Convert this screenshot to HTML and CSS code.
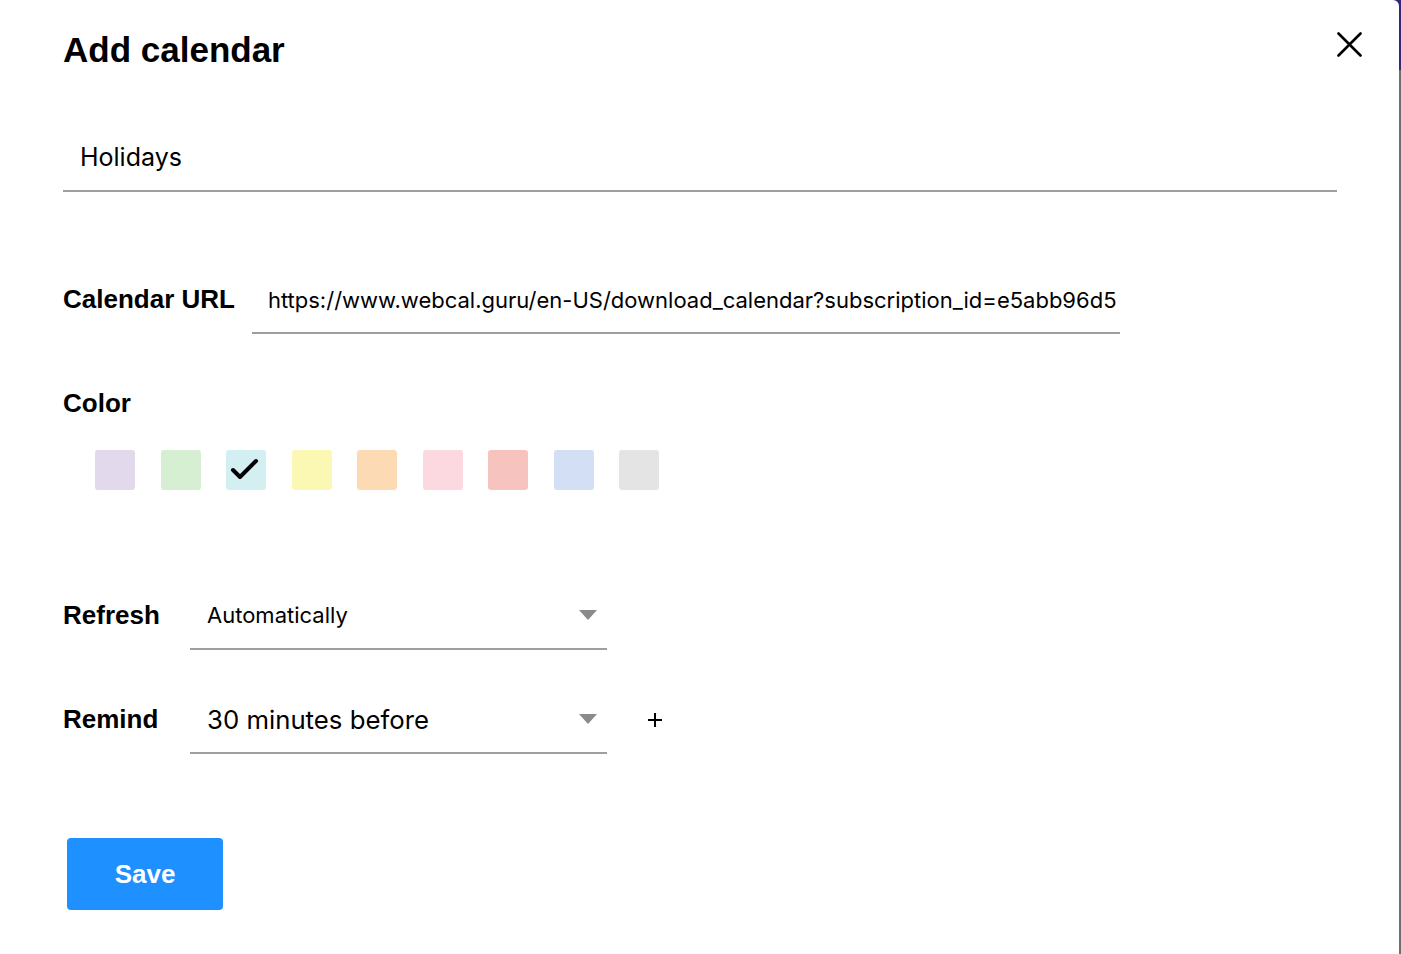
FILE: index.html
```html
<!DOCTYPE html>
<html lang="en">
<head>
    <meta charset="UTF-8">
    <meta name="viewport" content="width=device-width, initial-scale=1.0">
    <title>Add calendar</title>
    <link rel="stylesheet" href="styles.css">
</head>
<body>
    <div class="dialog">
        <div class="dialog-header">
            <h1>Add calendar</h1>
            <button class="close-btn" type="button" aria-label="Close">
                <svg width="26" height="26" viewBox="0 0 26 26">
                    <path d="M2.5 1.5 L24.5 23.5 M24.5 1.5 L2.5 23.5" stroke="#000" stroke-width="2.6" stroke-linecap="round" fill="none"/>
                </svg>
            </button>
        </div>

        <form id="calendarForm">
            <input class="name-input" type="text" id="calendarName" value="Holidays">

            <div class="form-row url-row">
                <label for="calendarUrl">Calendar URL</label>
                <input class="url-input" type="text" id="calendarUrl" value="https://www.webcal.guru/en-US/download_calendar?subscription_id=e5abb96d5">
            </div>

            <div class="section-label">Color</div>
            <div class="swatches">
                <span class="swatch" style="background-color: #e2d9ec;"></span>
                <span class="swatch" style="background-color: #d6efd3;"></span>
                <span class="swatch selected" style="background-color: #d4eff2;">
                    <svg width="40" height="40" viewBox="0 0 40 40">
                        <path d="M7 20 L14 27 L30 11" stroke="#000" stroke-width="4" stroke-linecap="round" stroke-linejoin="round" fill="none"/>
                    </svg>
                </span>
                <span class="swatch" style="background-color: #fbf8b4;"></span>
                <span class="swatch" style="background-color: #fbdab4;"></span>
                <span class="swatch" style="background-color: #fcd8e0;"></span>
                <span class="swatch" style="background-color: #f7c3bf;"></span>
                <span class="swatch" style="background-color: #d3dff5;"></span>
                <span class="swatch" style="background-color: #e4e4e4;"></span>
            </div>

            <div class="form-row refresh-row">
                <label>Refresh</label>
                <div class="select small">
                    <span>Automatically</span>
                    <svg class="caret" width="18" height="10" viewBox="0 0 18 10"><path d="M0 0 H18 L9 10 Z" fill="#8a8a8a"/></svg>
                </div>
            </div>

            <div class="form-row remind-row">
                <label>Remind</label>
                <div class="select">
                    <span>30 minutes before</span>
                    <svg class="caret" width="18" height="10" viewBox="0 0 18 10"><path d="M0 0 H18 L9 10 Z" fill="#8a8a8a"/></svg>
                </div>
                <button class="add-btn" type="button" aria-label="Add reminder">
                    <svg width="14" height="14" viewBox="0 0 14 14"><path d="M7 0 V14 M0 7 H14" stroke="#000" stroke-width="2" fill="none"/></svg>
                </button>
            </div>

            <button class="save-btn" type="submit">Save</button>
        </form>
    </div>
</body>
</html>
```

FILE: styles.css
```css
body {
    margin: 0;
    background: linear-gradient(#35287a 0, #35287a 70px, #6e6e6e 70px);
    font-family: "Liberation Sans", Arial, sans-serif;
    color: #000;
}
.dialog {
    width: 1399px;
    height: 954px;
    box-sizing: border-box;
    background-color: white;
    border-top-right-radius: 6px;
    padding: 30px 37px 0 63px;
}
.dialog-header {
    display: flex;
    justify-content: space-between;
    align-items: flex-start;
}
h1 {
    margin: 0;
    font-size: 35px;
    line-height: 40px;
    font-weight: bold;
}
.close-btn {
    background: none;
    border: none;
    padding: 0;
    margin-top: 2px;
    cursor: pointer;
    width: 26px;
    height: 26px;
}
.close-btn svg {
    display: block;
}
form {
    margin-right: 25px;
}
input[type="text"] {
    display: block;
    border: none;
    border-bottom: 2px solid #9e9e9e;
    outline: none;
    font-family: "Inter", "Liberation Sans", sans-serif;
    color: #000;
    background: transparent;
    box-sizing: content-box;
}
.name-input {
    width: calc(100% - 17px);
    height: 66px;
    margin-top: 54px;
    padding: 0 0 0 17px;
    font-size: 25px;
}
.form-row {
    display: flex;
    align-items: center;
}
label, .section-label {
    font-size: 26px;
    line-height: 30px;
    font-weight: bold;
}
.form-row label {
    margin-bottom: 3px;
}
.url-row {
    margin-top: 75px;
}
.url-row label {
    margin-right: 17px;
    margin-bottom: 4px;
}
.url-input {
    width: 852px;
    height: 65px;
    padding: 0 0 0 16px;
    font-size: 22px;
}
.section-label {
    margin-top: 54px;
}
.swatches {
    display: flex;
    gap: 25.5px;
    margin-top: 32px;
    padding-left: 32px;
}
.swatch {
    width: 40px;
    height: 40px;
    border-radius: 3px;
}
.swatch svg {
    display: block;
}
.refresh-row label,
.remind-row label {
    width: 127px;
}
.select {
    display: flex;
    align-items: center;
    justify-content: space-between;
    width: 390px;
    height: 66px;
    padding: 0 10px 0 17px;
    border-bottom: 2px solid #9e9e9e;
    font-family: "Inter", "Liberation Sans", sans-serif;
    font-size: 25.75px;
}
.select.small {
    font-size: 22px;
}
.select .caret {
    display: block;
}
.refresh-row {
    margin-top: 92px;
}
.remind-row {
    margin-top: 36px;
}
.add-btn {
    background: none;
    border: none;
    padding: 0;
    margin-left: 41px;
    width: 14px;
    height: 14px;
    cursor: pointer;
}
.add-btn svg {
    display: block;
}
.save-btn {
    display: block;
    margin: 84px 0 0 4px;
    width: 156px;
    height: 72px;
    background-color: #1e90ff;
    color: white;
    border: none;
    border-radius: 4px;
    font-family: "Liberation Sans", Arial, sans-serif;
    font-size: 26px;
    font-weight: bold;
    cursor: pointer;
}
```
